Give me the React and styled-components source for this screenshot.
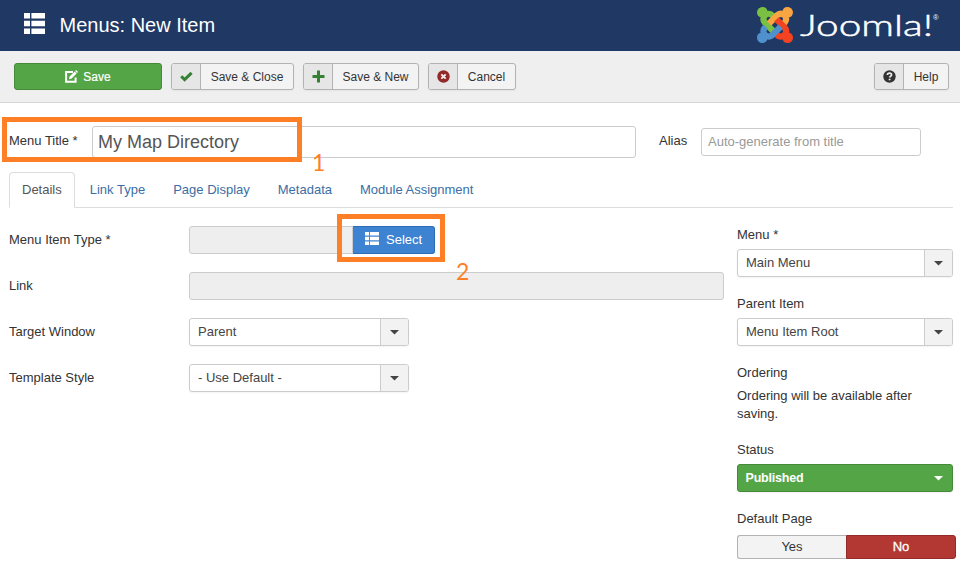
import styled, { createGlobalStyle, css } from "styled-components";

/**
 * Data
 */
const tabs = ["Details", "Link Type", "Page Display", "Metadata", "Module Assignment"];

const joomlaShapes = [
  {
    fill: "#7ac143",
    d: "M.6 92.1C.6 58.8 27.4 32 60.4 32c30 0 54.5 21.9 59.2 50.2 32.6-7.6 67.1.6 96.5 30l-44.3 44.3c-20.5-20.5-42.6-16.3-55.4-3.5-14.3 14.3-14.3 37.9 0 52.2l99.5 99.5-44 44.3c-87.7-87.2-49.7-49.7-99.8-99.7-26.8-26.5-35-64.8-24.8-98.9C20.4 144.6.6 120.7.6 92.1z",
  },
  {
    fill: "#f9a541",
    d: "M130.1 208.5l44.3 44.3c10-10 89.7-89.7 99.7-99.8 14.3-14.3 37.6-14.3 51.9 0 12.8 12.8 17 35-3.5 55.4l44 44.3c31.2-31.2 38.5-67.6 28.9-101.2 29.2-4.1 51.9-29.2 51.9-59.5 0-33.2-26.8-60.1-59.8-60.1-30.3 0-55.4 22.5-59.5 51.6-33.8-9.9-71.7-1.5-98.3 25.1-18.3 19.1-71.1 71.5-99.6 99.9z",
  },
  {
    fill: "#f44321",
    d: "M396.4 360.7c8.2-32.7-.9-68.5-26.3-93.9-11.8-12.2 5 4.7-99.5-99.7l-44.3 44.3 99.7 99.7c14.3 14.3 14.3 37.6 0 51.9-12.8 12.8-35 17-55.4-3.5l-44 44.3c27.6 30.2 68 38.8 102.7 28 5.5 27.4 29.7 48.1 58.9 48.1 33 0 59.8-26.8 59.8-60.1 0-30.2-22.5-55-51.6-59.1z",
  },
  {
    fill: "#5091cd",
    d: "M312.1 307.6l-44-44.3c-87 86.4-50.4 50.4-99.7 99.8-14.3 14.3-37.6 14.3-51.9 0-13.1-13.4-16.9-35.3 3.2-55.4l-44-44.3c-30.2 30.2-38 65.2-29.5 98.3-26.7 6-46.2 29.9-46.2 58.2C0 453.2 26.8 480 59.8 480c28.6 0 52.5-19.8 58.6-46.7 32.7 8.2 68.5-.6 94.2-26 32.1-32 12.2-12.4 99.5-99.7z",
  },
];

/**
 * Styles
 */
const GlobalStyle = createGlobalStyle`
  * {
    box-sizing: border-box;
  }
  body {
    margin: 0;
    background: #fff;
    color: #333;
    font: 13px/18px "Liberation Sans", Arial, sans-serif;
    overflow: hidden;
  }
  button, input {
    font: inherit;
    color: inherit;
    margin: 0;
  }
  svg {
    display: block;
    flex-shrink: 0;
  }
`;

const Page = styled.div`
  position: relative;
  width: 960px;
  height: 565px;
  overflow: hidden;
`;

const Header = styled.header`
  height: 51px;
  padding: 0 20px 0 24px;
  display: flex;
  justify-content: space-between;
  background: #203864;
  color: #fff;
`;

const PageTitle = styled.h1`
  margin: 0;
  padding-top: 13px;
  display: flex;
  gap: 14.5px;
  font-size: 20px;
  font-weight: normal;
  line-height: 24px;
`;

const Toolbar = styled.div`
  height: 52px;
  padding: 12px 11px 0 14px;
  display: flex;
  align-items: flex-start;
  gap: 9px;
  font-size: 12px;
  background: #efefef;
  border-bottom: 1px solid #d6d6d6;
`;

const SaveButton = styled.button`
  width: 148px;
  height: 27px;
  padding: 0;
  display: flex;
  align-items: center;
  justify-content: center;
  gap: 5px;
  color: #fff;
  background: #54a546;
  border: 1px solid #448a38;
  border-radius: 3px;
  -webkit-text-stroke: 0.2px #fff;
`;

const ToolButton = styled.button`
  height: 27px;
  width: ${({ $width }) => $width}px;
  padding: 0;
  display: flex;
  align-items: stretch;
  background: #f3f3f3;
  border: 1px solid #b3b3b3;
  border-radius: 3px;
  box-shadow: 0 1px 2px rgba(0, 0, 0, 0.05);
  overflow: hidden;
  margin-left: ${({ $last }) => ($last ? "auto" : 0)};

  .icon {
    width: 29px;
    display: flex;
    align-items: center;
    justify-content: center;
    background: #e6e6e6;
    border-right: 1px solid #b3b3b3;
  }

  .label {
    flex: 1;
    line-height: 27px;
    text-align: center;
    white-space: nowrap;
  }
`;

const TitleRow = styled.div`
  padding: 23px 0 0 9px;
  height: 69px;
  display: flex;
  align-items: flex-start;
`;

const TitleLabel = styled.label`
  width: ${({ $width }) => $width}px;
  padding-top: 6px;
`;

const inputBox = css`
  border: 1px solid #ccc;
  border-radius: 3px;
  outline: none;
`;

const TitleInput = styled.input`
  ${inputBox}
  width: 544px;
  height: 32px;
  margin-right: 23px;
  padding: 0 5px;
  font-size: 18px;
  color: #555;
`;

const AliasInput = styled.input`
  ${inputBox}
  width: 220px;
  height: 28px;
  margin-top: 2px;
  padding: 0 6px 2px;

  &::placeholder {
    color: #999;
    opacity: 1;
  }
`;

const Tabs = styled.nav`
  height: 36px;
  margin: 0 7px 0 9px;
  display: flex;
  gap: 2px;
  border-bottom: 1px solid #ddd;
`;

const Tab = styled.a`
  height: 36px;
  padding: 8px 12px 0;
  border: 1px solid transparent;
  border-radius: 4px 4px 0 0;
  color: #3a6ea5;

  ${({ $active }) =>
    $active &&
    css`
      color: #555;
      background: #fff;
      border-color: #ddd #ddd #fff;
    `}
`;

const Columns = styled.div`
  padding: 18px 4px 0 9px;
  display: flex;
  gap: 13px;
`;

const Fields = styled.div`
  width: 715px;
  display: flex;
  flex-direction: column;
  gap: 18px;
`;

const Field = styled.div`
  height: 28px;
  display: flex;

  > label {
    width: 180px;
    padding-top: 5px;
  }
`;

const ReadOnlyInput = styled.input`
  ${inputBox}
  width: ${({ $width }) => $width}px;
  height: 28px;
  background: #eee;
  ${({ $joined }) => $joined && "border-radius: 3px 0 0 3px;"}
`;

const SelectButton = styled.button`
  width: 82px;
  height: 28px;
  padding: 0 0 0 12px;
  display: flex;
  align-items: center;
  gap: 7px;
  color: #fff;
  background: #3d83d2;
  border: 1px solid #2b6cb3;
  border-left: 0;
  border-radius: 0 3px 3px 0;

  svg {
    margin-bottom: 3px;
  }
`;

const Dropdown = styled.div`
  width: ${({ $width }) => $width}px;
  height: 28px;
  display: flex;
  justify-content: space-between;
  line-height: 26px;
  padding-left: 8px;
  color: ${({ $success }) => ($success ? "#fff" : "#444")};
  background: ${({ $success }) => ($success ? "#54a546" : "#fff")};
  border: 1px solid ${({ $success }) => ($success ? "#448a38" : "#ccc")};
  border-radius: 3px;
  box-shadow: 0 1px 2px rgba(0, 0, 0, 0.05);
  overflow: hidden;

  ${({ $success }) =>
    $success &&
    css`
      padding-left: 7.5px;
      font-size: 12.5px;
      font-weight: bold;
      letter-spacing: -0.2px;
    `}

  .arrow {
    width: 28px;
    display: flex;
    align-items: center;
    justify-content: center;
    background: ${({ $success }) => ($success ? "none" : "#f2f2f2")};
    border-left: 1px solid ${({ $success }) => ($success ? "transparent" : "#ccc")};
  }
`;

const Sidebar = styled.aside`
  width: 219px;
`;

const SideField = styled.div`
  padding-bottom: ${({ $last }) => ($last ? 0 : 18)}px;

  > label {
    display: block;
    margin-bottom: 5px;
  }

  p {
    width: 190px;
    margin: 0;
  }
`;

const Toggle = styled.div`
  width: 219px;
  height: 24px;
  margin-top: 7px;
  display: flex;
`;

const ToggleOption = styled.button`
  width: ${({ $danger }) => ($danger ? 110 : 109)}px;
  padding: 0;
  line-height: 22px;
  color: ${({ $danger }) => ($danger ? "#fff" : "#333")};
  background: ${({ $danger }) => ($danger ? "#b33733" : "#f3f3f3")};
  border: 1px solid ${({ $danger }) => ($danger ? "#942a27" : "#b3b3b3")};
  border-radius: ${({ $danger }) => ($danger ? "0 3px 3px 0" : "3px 0 0 3px")};
  ${({ $danger }) => ($danger ? "-webkit-text-stroke: 0.3px #fff;" : "border-right: 0;")}
`;

const Highlight = styled.div`
  position: absolute;
  left: ${({ $x }) => $x}px;
  top: ${({ $y }) => $y}px;
  width: ${({ $width }) => $width}px;
  height: ${({ $height }) => $height}px;
  border: 5px solid #ff7f27;
`;

const StepNumber = styled.span`
  position: absolute;
  left: ${({ $x }) => $x}px;
  top: ${({ $y }) => $y}px;
  font: 23px/28px Lato, sans-serif;
  color: #ff7f27;
`;

/**
 * Icons
 */
const ListIcon = ({ width, height }) => (
  <svg width={width} height={height} viewBox="0 0 21 21" preserveAspectRatio="none" fill="#fff">
    <path d="M0 0h6v5.5H0zM7.4 0H21v5.5H7.4zM0 7.7h6v5.5H0zM7.4 7.7H21v5.5H7.4zM0 15.4h6V21H0zM7.4 15.4H21V21H7.4z" />
  </svg>
);

const EditIcon = () => (
  <svg width="13" height="13" viewBox="0 0 13 13">
    <path d="M8 2H1.1v9.8H10.6V7.5" fill="none" stroke="#fff" strokeWidth="2" />
    <path d="M4 9.3l.6-2.7L9.6 1.6l2 2-5 5z" fill="#fff" />
    <path d="M10.2 1l1-1L13 1.9l-1 1z" fill="#fff" />
  </svg>
);

const CheckIcon = () => (
  <svg width="13" height="11" viewBox="0 0 13 11">
    <path d="M1.2 5.2l3.4 3.4L11.6 1.8" fill="none" stroke="#378137" strokeWidth="3" />
  </svg>
);

const PlusIcon = () => (
  <svg width="13" height="13" viewBox="0 0 13 13">
    <path d="M6.5 .5v12M.5 6.5h12" stroke="#378137" strokeWidth="3" />
  </svg>
);

const CancelIcon = () => (
  <svg width="13" height="13" viewBox="0 0 13 13">
    <circle cx="6.5" cy="6.5" r="6.2" fill="#942a27" />
    <path d="M4.3 4.3l4.4 4.4M8.7 4.3L4.3 8.7" stroke="#eee" strokeWidth="1.9" />
  </svg>
);

const HelpIcon = () => (
  <svg width="13" height="13" viewBox="0 0 13 13">
    <circle cx="6.5" cy="6.5" r="6.2" fill="#333" />
    <path d="M4.4 5c0-2.6 4.2-2.4 4.2-.2 0 1.5-2 1.4-2 2.8" fill="none" stroke="#eee" strokeWidth="1.6" />
    <path d="M5.7 8.7h1.8v1.6H5.7z" fill="#eee" />
  </svg>
);

const Caret = ({ color = "#444" }) => (
  <svg width="9" height="5" viewBox="0 0 9 5">
    <path d="M0 0h9L4.5 4.5z" fill={color} />
  </svg>
);

const JoomlaLogo = () => (
  <svg width="184" height="51" viewBox="0 0 184 51">
    <svg x="1" y="7" width="36" height="36" viewBox="-9 23 466 466">
      {joomlaShapes.map(({ fill, d }) => (
        <path key={fill} fill={fill} stroke={fill} strokeWidth="18" d={d} />
      ))}
    </svg>
    <text
      x="44"
      y="36"
      fill="#fff"
      fontFamily="Lato, sans-serif"
      fontWeight="300"
      fontSize="30"
      stroke="#fff"
      strokeWidth="0.5"
      textLength="133"
      lengthAdjust="spacingAndGlyphs"
    >
      Joomla!
    </text>
    <text x="177" y="19.5" fill="#fff" fontFamily="Liberation Sans, sans-serif" fontSize="7.5">
      ®
    </text>
  </svg>
);

/**
 * Parts
 */
const ToolbarButton = ({ icon, label, width, last }) => (
  <ToolButton $width={width} $last={last}>
    <span className="icon">{icon}</span>
    <span className="label">{label}</span>
  </ToolButton>
);

const SelectBox = ({ value, width, success }) => (
  <Dropdown $width={width} $success={success}>
    <span>{value}</span>
    <span className="arrow">
      <Caret color={success ? "#fff" : "#444"} />
    </span>
  </Dropdown>
);

const App = () => {
  return (
    <Page>
      <GlobalStyle />
      <Header>
        <PageTitle>
          <ListIcon width={21} height={21} />
          Menus: New Item
        </PageTitle>
        <JoomlaLogo />
      </Header>

      <Toolbar>
        <SaveButton>
          <EditIcon />
          Save
        </SaveButton>
        <ToolbarButton icon={<CheckIcon />} label="Save & Close" width={123} />
        <ToolbarButton icon={<PlusIcon />} label="Save & New" width={116} />
        <ToolbarButton icon={<CancelIcon />} label="Cancel" width={88} />
        <ToolbarButton icon={<HelpIcon />} label="Help" width={75} last />
      </Toolbar>

      <TitleRow>
        <TitleLabel $width={83}>Menu Title *</TitleLabel>
        <TitleInput defaultValue="My Map Directory" />
        <TitleLabel $width={42}>Alias</TitleLabel>
        <AliasInput placeholder="Auto-generate from title" />
      </TitleRow>

      <Tabs>
        {tabs.map((tab, i) => (
          <Tab key={tab} $active={i === 0}>
            {tab}
          </Tab>
        ))}
      </Tabs>

      <Columns>
        <Fields>
          <Field>
            <label>Menu Item Type *</label>
            <ReadOnlyInput $width={164} $joined readOnly />
            <SelectButton>
              <ListIcon width={14} height={13} />
              Select
            </SelectButton>
          </Field>
          <Field>
            <label>Link</label>
            <ReadOnlyInput $width={535} readOnly />
          </Field>
          <Field>
            <label>Target Window</label>
            <SelectBox value="Parent" width={220} />
          </Field>
          <Field>
            <label>Template Style</label>
            <SelectBox value="- Use Default -" width={220} />
          </Field>
        </Fields>

        <Sidebar>
          <SideField>
            <label>Menu *</label>
            <SelectBox value="Main Menu" width={216} />
          </SideField>
          <SideField>
            <label>Parent Item</label>
            <SelectBox value="Menu Item Root" width={216} />
          </SideField>
          <SideField>
            <label>Ordering</label>
            <p>Ordering will be available after saving.</p>
          </SideField>
          <SideField>
            <label>Status</label>
            <SelectBox value="Published" width={216} success />
          </SideField>
          <SideField $last>
            <label>Default Page</label>
            <Toggle>
              <ToggleOption>Yes</ToggleOption>
              <ToggleOption $danger>No</ToggleOption>
            </Toggle>
          </SideField>
        </Sidebar>
      </Columns>

      <Highlight $x={2} $y={117} $width={300} $height={45} />
      <StepNumber $x={312} $y={148}>1</StepNumber>
      <Highlight $x={337} $y={214} $width={108} $height={48} />
      <StepNumber $x={456} $y={257}>2</StepNumber>
    </Page>
  );
};

export default App;
